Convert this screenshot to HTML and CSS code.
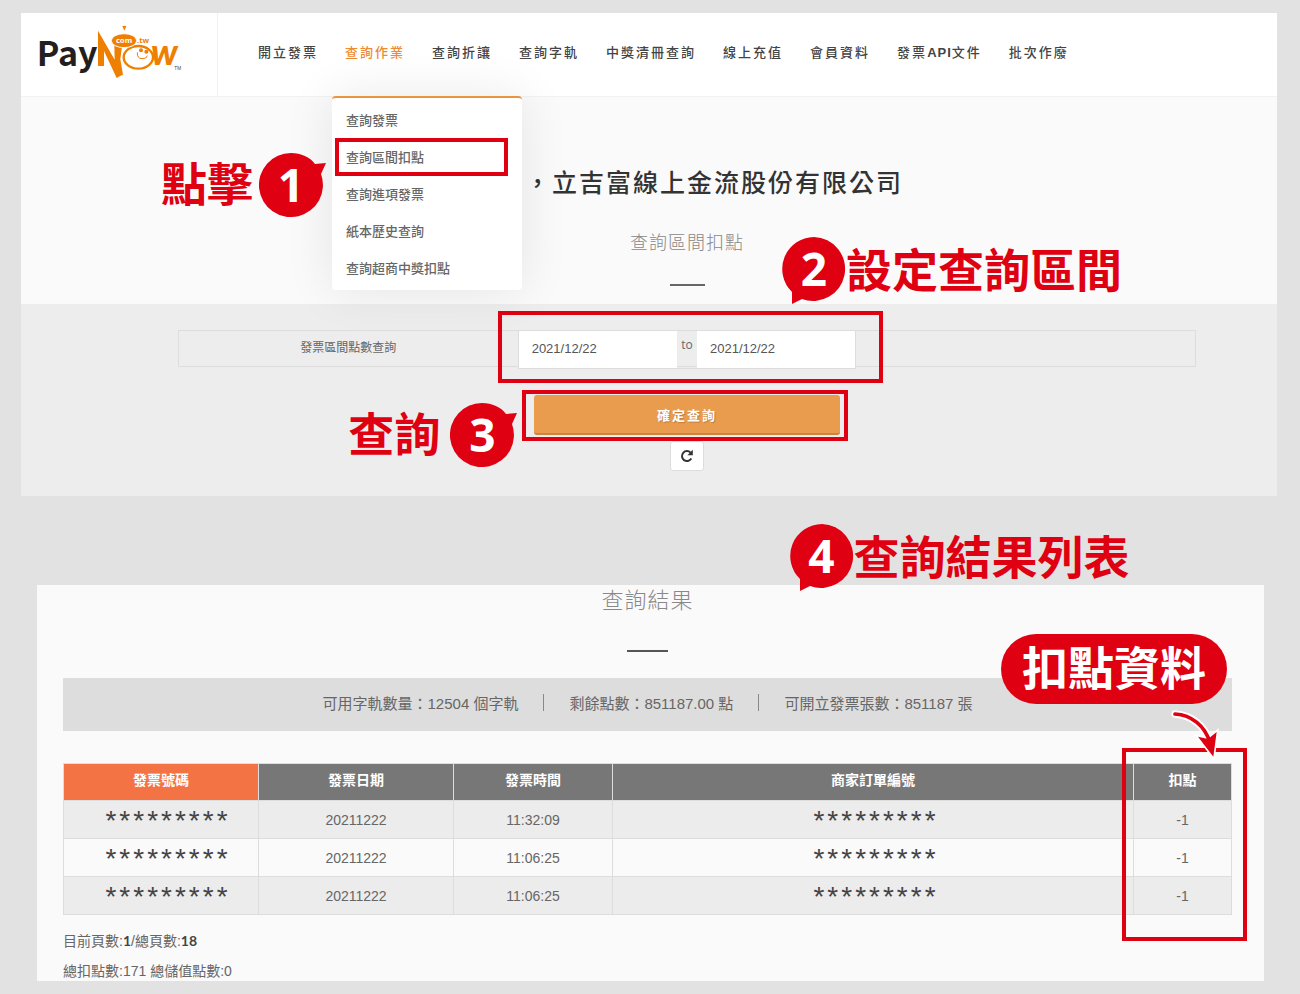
FILE: index.html
```html
<!DOCTYPE html>
<html lang="zh-Hant">
<head>
<meta charset="utf-8">
<meta name="viewport" content="width=device-width, initial-scale=1">
<title>PayNow 查詢區間扣點</title>
<link rel="stylesheet" href="styles.css">
</head>
<body>
<section class="panel">
  <header class="topbar">
    <a class="logo" href="#" aria-label="PayNow">
      <svg viewBox="3 9 588 249" width="196" height="83">
        <text class="logo-pay" x="50" y="168">Pay</text>
        <path fill="#ee7f00" d="M234 62 L284 149 L283 106 L306 108 L301 148 L309 194 Q301 196 290 204 L252 123 L252 168 L234 168 Z"/>
        <text class="logo-w" x="393" y="164">w</text>
        <ellipse cx="355" cy="142" rx="44" ry="34" fill="#fff" stroke="#ee7f00" stroke-width="7"/>
        <ellipse cx="312" cy="92" rx="38" ry="21" fill="#ee7f00" stroke="#fff" stroke-width="3"/>
        <path fill="#ee7f00" d="M307 48 H319 L313 62 Z"/>
        <circle cx="363" cy="121" r="6" fill="#ee7f00"/>
        <circle cx="379" cy="125" r="6" fill="#ee7f00"/>
        <path d="M352 127 Q351 146 366 146 Q380 147 382 137" fill="none" stroke="#ee7f00" stroke-width="3"/>
        <text class="logo-com" x="312" y="98" text-anchor="middle">com</text>
        <text class="logo-tw" x="351" y="98">.tw</text>
        <text class="logo-tm" x="463" y="179">TM</text>
      </svg>
    </a>
    <nav>
      <ul class="nav">
        <li><a href="#">開立發票</a></li>
        <li class="current">
          <a href="#">查詢作業</a>
          <div class="menu">
            <ul>
              <li><a href="#">查詢發票</a></li>
              <li><a href="#">查詢區間扣點</a></li>
              <li><a href="#">查詢進項發票</a></li>
              <li><a href="#">紙本歷史查詢</a></li>
              <li><a href="#">查詢超商中獎扣點</a></li>
            </ul>
            <div class="frame frame-menu"></div>
            <div class="callout callout-1">
              <span>點擊</span>
              <span class="bubble">
                <svg viewBox="0 0 67 64" width="67" height="64"><path fill="#df0011" d="M32 0 C42 0 51 4 56 11 L67 10 L62 21 A32 32 0 1 1 32 0 Z"/></svg>
                <b>1</b>
              </span>
            </div>
          </div>
        </li>
        <li><a href="#">查詢折讓</a></li>
        <li><a href="#">查詢字軌</a></li>
        <li><a href="#">中獎清冊查詢</a></li>
        <li><a href="#">線上充值</a></li>
        <li><a href="#">會員資料</a></li>
        <li><a href="#">發票<b>API</b>文件</a></li>
        <li><a href="#">批次作廢</a></li>
      </ul>
    </nav>
  </header>

  <div class="hero">
    <div class="hero-inner">
      <h1>，立吉富線上金流股份有限公司</h1>
      <p class="subtitle">查詢區間扣點</p>
      <div class="rule"></div>
      <div class="callout callout-2">
        <span class="bubble">
          <svg viewBox="0 0 64 67" width="64" height="67"><path fill="#df0011" d="M32 0 A32 32 0 1 1 20 62 L10 67 L10 55 A32 32 0 0 1 32 0 Z"/></svg>
          <b>2</b>
        </span>
        <span>設定查詢區間</span>
      </div>
    </div>
  </div>

  <form class="query">
    <div class="range">
      <label for="from">發票區間點數查詢</label>
      <div class="dates">
        <input id="from" type="text" value="2021/12/22">
        <span>to</span>
        <input type="text" value="2021/12/22" aria-label="結束日期">
        <div class="frame frame-dates"></div>
      </div>
      <div></div>
    </div>
    <div class="submit">
      <button type="button" class="btn-main">確定查詢</button>
      <div class="frame frame-submit"></div>
      <div class="callout callout-3">
        <span>查詢</span>
        <span class="bubble">
          <svg viewBox="0 0 67 64" width="67" height="64"><path fill="#df0011" d="M32 0 C42 0 51 4 56 11 L67 10 L62 21 A32 32 0 1 1 32 0 Z"/></svg>
          <b>3</b>
        </span>
      </div>
    </div>
    <button type="button" class="btn-reset" aria-label="重新整理">
      <svg viewBox="0 0 14 14" width="14" height="14"><path d="M11.3 9.6 A5 5 0 1 1 10.6 3.6" fill="none" stroke="#333" stroke-width="2"/><path d="M12.8 0.8 V6.2 H7.4 Z" fill="#333"/></svg>
    </button>
  </form>
</section>

<section class="results">
  <h2>查詢結果</h2>
  <div class="rule rule-wide"></div>
  <div class="stats">
    <span>可用字軌數量：12504 個字軌</span>
    <i></i>
    <span>剩餘點數：851187.00 點</span>
    <i></i>
    <span>可開立發票張數：851187 張</span>
  </div>
  <div class="table-wrap">
    <table>
      <colgroup><col class="c-no"><col class="c-date"><col class="c-time"><col class="c-order"><col class="c-pts"></colgroup>
      <thead>
        <tr><th class="sorted">發票號碼</th><th>發票日期</th><th>發票時間</th><th>商家訂單編號</th><th>扣點</th></tr>
      </thead>
      <tbody>
        <tr><td class="mask mask-no">*********</td><td>20211222</td><td>11:32:09</td><td class="mask">*********</td><td>-1</td></tr>
        <tr><td class="mask mask-no">*********</td><td>20211222</td><td>11:06:25</td><td class="mask">*********</td><td>-1</td></tr>
        <tr><td class="mask mask-no">*********</td><td>20211222</td><td>11:06:25</td><td class="mask">*********</td><td>-1</td></tr>
      </tbody>
    </table>
    <div class="frame frame-points"></div>
    <div class="pill">扣點資料</div>
    <svg class="arrow" viewBox="630 264 150 156" width="50" height="52">
      <g stroke="#fff" stroke-linecap="round" fill="none">
        <path d="M645 282 C695 285 735 318 749 366" stroke-width="22"/>
        <path d="M714 350 L744 357 L770 336 L760 410 Z" stroke-width="10" fill="#fff"/>
      </g>
      <path d="M645 282 C695 285 735 318 749 366" stroke="#df0011" stroke-width="11" stroke-linecap="round" fill="none"/>
      <path d="M714 350 L744 357 L770 336 L760 410 Z" fill="#df0011"/>
    </svg>
  </div>
  <div class="totals">
    <p>目前頁數:<b>1</b>/總頁數:<b>18</b></p>
    <p>總扣點數:171 總儲值點數:0</p>
  </div>
  <div class="callout callout-4">
    <span class="bubble">
      <svg viewBox="0 0 64 67" width="64" height="67"><path fill="#df0011" d="M32 0 A32 32 0 1 1 20 62 L10 67 L10 55 A32 32 0 0 1 32 0 Z"/></svg>
      <b>4</b>
    </span>
    <span>查詢結果列表</span>
  </div>
</section>
</body>
</html>
```

FILE: styles.css
```css
* { box-sizing: border-box; }
body {
  margin: 0;
  padding: 13px 23px 13px 21px;
  background: #e2e2e2;
  color: #666;
  font-family: "Liberation Sans", "Noto Sans CJK TC", sans-serif;
  font-size: 14px;
}
h1, h2, p, ul { margin: 0; padding: 0; }
ul { list-style: none; }
a { color: inherit; text-decoration: none; }
button, input { font: inherit; margin: 0; }
svg { display: block; }

.panel { background: #fafafa; }
.topbar {
  display: flex;
  gap: 40px;
  background: #fff;
  border-bottom: 1px solid #f2f2f2;
}
.logo { border-right: 1px solid #f2f2f2; }
.logo-pay { font: bold 102px "Noto Sans CJK TC", sans-serif; fill: #231f20; }
.logo-w { font: italic 900 108px Lato, sans-serif; fill: #ee7f00; }
.logo-com { font: bold 23px "Noto Sans", sans-serif; fill: #fff; }
.logo-tw { font: bold 23px "Noto Sans", sans-serif; fill: #ee7f00; }
.logo-tm { font: 14px "Liberation Sans", sans-serif; fill: #444; }

.nav { display: flex; gap: 27px; }
.nav > li { position: relative; }
.nav > li > a {
  display: block;
  line-height: 80px;
  font-size: 13px;
  font-weight: 500;
  letter-spacing: 2px;
  white-space: nowrap;
  color: #444;
}
.nav > li > a b { letter-spacing: 1px; }
.nav > .current > a { color: #ee8a30; }
.menu {
  position: absolute;
  z-index: 2;
  top: 83px;
  left: -13px;
  width: 190px;
  padding: 4px 0 3px;
  background: #fff;
  border-top: 2px solid #ea9440;
  border-radius: 4px;
  box-shadow: 0 0 50px rgba(0, 0, 0, 0.09);
}
.menu li a {
  display: block;
  padding: 0 14px;
  line-height: 37px;
  font-size: 13px;
  font-weight: 500;
}

.hero { padding: 0 81px 0 157px; }
.hero-inner {
  position: relative;
  padding: 66px 0 18px;
  text-align: center;
}
h1 {
  padding-left: 54px;
  line-height: 40px;
  font-size: 25px;
  font-weight: 500;
  letter-spacing: 2px;
  color: #333;
}
.subtitle {
  margin-top: 25px;
  line-height: 30px;
  font-size: 18px;
  font-weight: 300;
  letter-spacing: 1px;
  color: #888;
}
.rule { width: 35px; height: 2px; margin: 26px auto 0; background: #666; }

.query {
  padding: 26px 81px 25px 157px;
  background: #ededed;
}
.range {
  display: grid;
  grid-template-columns: repeat(3, minmax(0, 1fr));
  height: 37px;
  border: 1px solid #ddd;
}
.range label { line-height: 34px; text-align: center; font-size: 12px; }
.dates {
  position: relative;
  display: flex;
  height: 38px;
  border: 1px solid #ddd;
  border-top: 0;
}
.dates input {
  flex: 1;
  min-width: 0;
  padding: 0 13px 2px;
  border: 0;
  background: #fff;
  color: #555;
  font-size: 13px;
}
.dates span {
  width: 20px;
  line-height: 28px;
  text-align: center;
  font-family: "Open Sans", sans-serif;
  font-size: 12px;
}
.submit { position: relative; width: 30%; margin: 28px auto 6px; }
.btn-main {
  display: block;
  width: 100%;
  height: 40px;
  padding: 0;
  border: 0;
  border-bottom: 2px solid #c98541;
  border-radius: 3px;
  background: #ea9c4e;
  color: #fff;
  font-size: 13px;
  font-weight: 700;
  letter-spacing: 2px;
  text-shadow: 1px 1px 1px rgba(0, 0, 0, 0.2);
}
.btn-reset {
  display: flex;
  align-items: center;
  justify-content: center;
  width: 34px;
  height: 30px;
  margin: 0 auto;
  padding: 0;
  border: 1px solid #ddd;
  border-radius: 3px;
  background: #fff;
}

.results {
  position: relative;
  margin: 89px 13px 0 16px;
  padding: 0 32px 0 26px;
  background: #fafafa;
}
h2 {
  line-height: 32px;
  text-align: center;
  font-size: 22px;
  font-weight: 300;
  letter-spacing: 1px;
  color: #888;
}
.rule-wide { width: 41px; margin-top: 33px; background: #555; }
.stats {
  display: flex;
  align-items: center;
  justify-content: center;
  gap: 25px;
  height: 53px;
  margin: 26px 0 32px;
  padding-bottom: 4px;
  background: #ddd;
  font-size: 15px;
  white-space: nowrap;
}
.stats i { width: 1px; height: 17px; background: #888; }

.table-wrap { position: relative; }
table {
  width: 100%;
  table-layout: fixed;
  border-collapse: collapse;
  text-align: center;
}
.c-no, .c-date { width: 195px; }
.c-time { width: 159px; }
.c-pts { width: 98px; }
th, td { padding: 0; border: 1px solid #ddd; }
th {
  height: 37px;
  padding-bottom: 6px;
  background: #777;
  color: #fff;
  font-size: 14px;
  font-weight: 700;
}
.sorted { background: #f37345; }
td { height: 38px; }
.mask {
  padding-top: 2px;
  padding-left: 6px;
  color: #444;
  font-size: 28px;
  line-height: 28px;
  letter-spacing: 3px;
}
.mask-no { padding-left: 14px; }
tbody tr:nth-child(odd) { background: #ececec; }
.totals { display: grid; gap: 10px; padding-top: 16px; }
.totals p { line-height: 20px; }
.totals b { font-family: Lato, sans-serif; font-size: 14px; color: #444; }

/* Red tutorial marks lying over the screens */
.frame { position: absolute; border: 4px solid #df0011; pointer-events: none; }
.frame-menu { top: 40px; left: 3px; width: 173px; height: 38px; }
.frame-dates { top: -20px; right: -28px; bottom: -15px; left: -21px; }
.frame-submit { top: -5px; right: -8px; bottom: -6px; left: -12px; }
.frame-points { top: -15px; right: -15px; bottom: -26px; width: 125px; }
.callout {
  position: absolute;
  z-index: 1;
  display: flex;
  align-items: center;
  white-space: nowrap;
  color: #df0011;
  font-size: 46px;
  font-weight: 700;
  line-height: 64px;
}
.callout-1 { top: 55px; right: 196px; gap: 6px; }
.callout-2 { top: 140px; left: calc(50% + 95px); }
.callout-3 { top: 8px; right: calc(100% + 17px); gap: 10px; }
.callout-4 { top: -61px; left: calc(50% + 139px); }
.bubble { position: relative; }
.bubble b {
  position: absolute;
  top: 0;
  left: 0;
  width: 64px;
  text-align: center;
  color: #fff;
  font-family: "Noto Sans", sans-serif;
  font-weight: 700;
  line-height: 62px;
}
.pill {
  position: absolute;
  top: -129px;
  right: 5px;
  padding: 0 21px;
  border-radius: 35px;
  background: #df0011;
  color: #fff;
  font-size: 46px;
  font-weight: 700;
  line-height: 70px;
  white-space: nowrap;
}
.arrow { position: absolute; top: -55px; right: 12px; }
```
